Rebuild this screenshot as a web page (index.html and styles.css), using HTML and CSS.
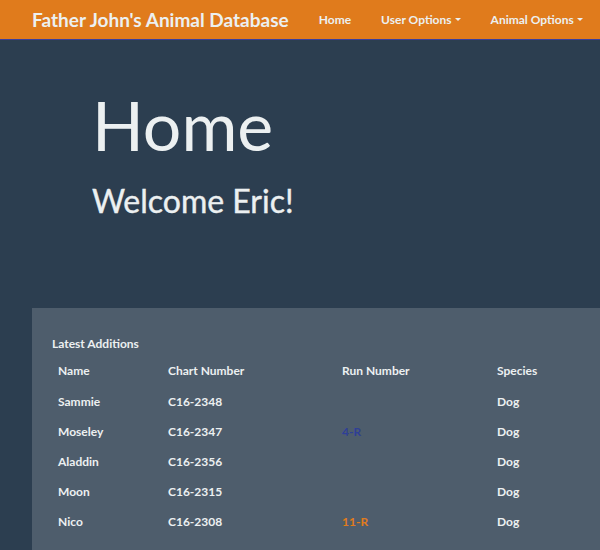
FILE: index.html
```html
<!DOCTYPE html>
<html>
<head>
<meta charset="utf-8">
<link rel="stylesheet" href="styles.css">
</head>
<body>
<nav class="navbar">
  <span class="brand">Father John's Animal Database</span>
  <ul class="nav">
    <li>Home</li>
    <li>User Options<span class="caret"></span></li>
    <li>Animal Options<span class="caret"></span></li>
  </ul>
</nav>
<header class="hero">
  <h1 class="title">Home</h1>
  <h2 class="welcome">Welcome Eric!</h2>
</header>
<section class="panel">
  <h3 class="panel-title">Latest Additions</h3>
  <div class="table">
    <div class="row head"><span>Name</span><span>Chart Number</span><span>Run Number</span><span>Species</span></div>
    <div class="row"><span>Sammie</span><span>C16-2348</span><span></span><span>Dog</span></div>
    <div class="row"><span>Moseley</span><span>C16-2347</span><span class="run-blue">4-R</span><span>Dog</span></div>
    <div class="row"><span>Aladdin</span><span>C16-2356</span><span></span><span>Dog</span></div>
    <div class="row"><span>Moon</span><span>C16-2315</span><span></span><span>Dog</span></div>
    <div class="row"><span>Nico</span><span>C16-2308</span><span class="run-orange">11-R</span><span>Dog</span></div>
  </div>
</section>
</body>
</html>
```
FILE: styles.css
```css
html, body {
  margin: 0;
  padding: 0;
  background: #2c3e50;
  font-family: Lato, "Open Sans", sans-serif;
  color: #ecf0f1;
  overflow: hidden;
  height: 550px;
}
.navbar {
  height: 39px;
  background: #e07b1c;
  border-bottom: 1px solid #3a3f9c;
  display: flex;
  align-items: center;
  padding-left: 32px;
  white-space: nowrap;
}
.brand {
  font-size: 19px;
  font-weight: bold;
  color: #ecf0f1;
}
.nav {
  list-style: none;
  margin: 0 0 0 15px;
  padding: 0;
  display: flex;
}
.nav li {
  padding: 0 15px;
  font-size: 12px;
  font-weight: bold;
  color: #ecf0f1;
  display: flex;
  align-items: center;
}
.caret {
  display: inline-block;
  width: 0;
  height: 0;
  margin-left: 3px;
  border-top: 3px solid #ecf0f1;
  border-left: 3px solid transparent;
  border-right: 3px solid transparent;
}
.hero {
  padding: 0 92px;
  height: 268px;
  overflow: hidden;
}
.title {
  margin: 0;
  padding-top: 51px;
  font-size: 68px;
  font-weight: normal;
  line-height: 1;
}
.welcome {
  margin: 26px 0 0;
  font-size: 32px;
  font-weight: normal;
  line-height: 1;
  -webkit-text-stroke: 0.4px #ecf0f1;
}
.panel {
  margin-left: 32px;
  background: #4e5d6c;
  padding: 28px 20px 40px;
  height: 300px;
}
.panel-title {
  margin: 0 0 4px;
  font-size: 12px;
  font-weight: bold;
}
.row {
  display: grid;
  grid-template-columns: 110px 174px 155px 100px;
  padding-left: 6px;
  height: 30px;
  align-items: center;
  font-size: 12px;
  font-weight: bold;
}
.row.head {
  margin-bottom: 1px;
}
.run-blue { color: #2f3f96; }
.run-orange { color: #e07b1c; }
```
